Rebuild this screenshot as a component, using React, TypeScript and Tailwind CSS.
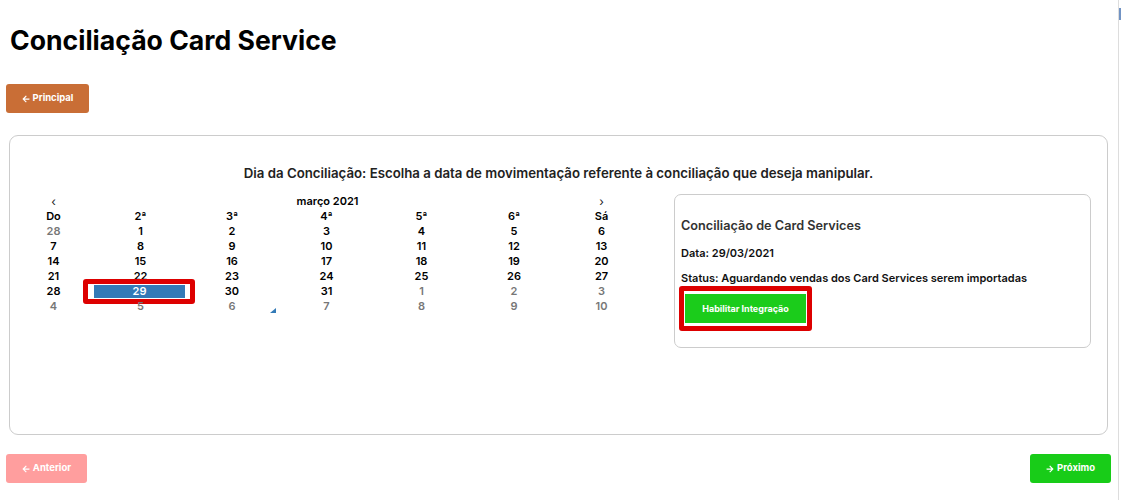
import React from 'react';
import { FaArrowLeft, FaArrowRight } from 'react-icons/fa';

type Day = { n: number; muted?: boolean; selected?: boolean };

const weekDays = ['Do', '2ª', '3ª', '4ª', '5ª', '6ª', 'Sá'];

const weeks: Day[][] = [
  [{ n: 28, muted: true }, { n: 1 }, { n: 2 }, { n: 3 }, { n: 4 }, { n: 5 }, { n: 6 }],
  [{ n: 7 }, { n: 8 }, { n: 9 }, { n: 10 }, { n: 11 }, { n: 12 }, { n: 13 }],
  [{ n: 14 }, { n: 15 }, { n: 16 }, { n: 17 }, { n: 18 }, { n: 19 }, { n: 20 }],
  [{ n: 21 }, { n: 22 }, { n: 23 }, { n: 24 }, { n: 25 }, { n: 26 }, { n: 27 }],
  [{ n: 28 }, { n: 29, selected: true }, { n: 30 }, { n: 31 }, { n: 1, muted: true }, { n: 2, muted: true }, { n: 3, muted: true }],
  [{ n: 4, muted: true }, { n: 5, muted: true }, { n: 6, muted: true }, { n: 7, muted: true }, { n: 8, muted: true }, { n: 9, muted: true }, { n: 10, muted: true }],
];

const cols = 'grid grid-cols-[85px_89px_94px_95px_95px_90px_85px]';

const Calendar: React.FC = () => (
  <div className="relative w-[633px] text-[11px] font-semibold leading-[15px] text-black">
    <div className={cols}>
      <div className="h-[15px] text-center text-[12px] font-normal text-[#222]">‹</div>
      <div className="col-span-5 h-[15px] text-center">março 2021</div>
      <div className="h-[15px] text-center text-[12px] font-normal text-[#222]">›</div>
    </div>
    <div className={cols}>
      {weekDays.map((d) => (
        <div key={d} className="h-[15px] text-center">{d}</div>
      ))}
    </div>
    {weeks.map((week, i) => (
      <div key={i} className={cols}>
        {week.map((day, j) => (
          <div
            key={j}
            className={`relative h-[15px] text-center ${day.muted ? 'text-[#777]' : ''}`}
          >
            {day.selected ? (
              <>
                <div className="-ml-[2px] mt-[1px] h-[13px] bg-[#337ab7] leading-[13px] text-white">{day.n}</div>
                <span className="pointer-events-none absolute -left-[13px] -right-[10px] -top-[5px] -bottom-[5px] rounded-[3px] border-[5px] border-[#dd0000]" />
              </>
            ) : (
              day.n
            )}
          </div>
        ))}
      </div>
    ))}
    <svg className="absolute left-[259px] top-[114px]" width="6" height="5" viewBox="0 0 6 5">
      <polygon points="6,0 6,5 0,5" fill="#337ab7" />
    </svg>
  </div>
);

export default function App() {
  return (
    <div className="flex min-h-[500px] bg-white" style={{ fontFamily: 'Inter, "Noto Sans", sans-serif' }}>
      <div className="w-[1118px]">
        <h1 className="px-[10px] pt-[24px] text-[26.6px] font-bold leading-[32px] text-black">Conciliação Card Service</h1>

        <div className="mt-[28px] px-[6px]">
          <button className="flex h-[29px] w-[83px] items-center justify-center gap-[3px] rounded-[3px] bg-[#c96e36] text-[9.5px] font-bold text-white">
            <FaArrowLeft className="h-[8px] w-[8px]" /> Principal
          </button>
        </div>

        <div className="mx-[9px] mt-[22px] h-[300px] w-[1099px] rounded-[9px] border border-[#cccccc]">
          <h4 className="pt-[29px] text-center text-[13.25px] font-semibold leading-[17px] text-[#222]">
            Dia da Conciliação: Escolha a data de movimentação referente à conciliação que deseja manipular.
          </h4>
          <div className="mt-[12px] flex items-start">
            <div className="ml-[1px]">
              <Calendar />
            </div>
            <div className="ml-[30px] h-[154px] w-[417px] rounded-[7px] border border-[#cccccc] px-[6px]">
              <h5 className="mt-[22px] text-[12.7px] font-semibold leading-[17px] text-[#333]">Conciliação de Card Services</h5>
              <p className="mt-[12px] text-[11px] font-semibold leading-[14px] text-[#111]">Data: 29/03/2021</p>
              <p className="mt-[11px] text-[11px] font-semibold leading-[14px] text-[#111]">
                Status: Aguardando vendas dos Card Services serem importadas
              </p>
              <div className="-ml-[2px] mt-[1px] inline-flex rounded-[3px] border-[5px] border-[#dd0000] px-[1px] py-[3px]">
                <button className="h-[29px] w-[121px] bg-[#1bcc1b] text-[9px] font-bold text-white">Habilitar Integração</button>
              </div>
            </div>
          </div>
        </div>

        <div className="mt-[19px] flex justify-between px-[6px] pr-[7px]">
          <button className="flex h-[29px] w-[81px] items-center justify-center gap-[3px] rounded-[3px] bg-[#ff9e9e] text-[9.5px] font-bold text-white">
            <FaArrowLeft className="h-[8px] w-[8px]" /> Anterior
          </button>
          <button className="flex h-[29px] w-[81px] items-center justify-center gap-[3px] rounded-[3px] bg-[#18cc18] text-[9.5px] font-bold text-white">
            <FaArrowRight className="h-[8px] w-[8px]" /> Próximo
          </button>
        </div>
      </div>
      <div className="w-[3px] border-l border-[#dddddd]">
        <div className="mt-[8px] h-[12px] w-[2px] bg-[#7193c4]" />
      </div>
    </div>
  );
}
